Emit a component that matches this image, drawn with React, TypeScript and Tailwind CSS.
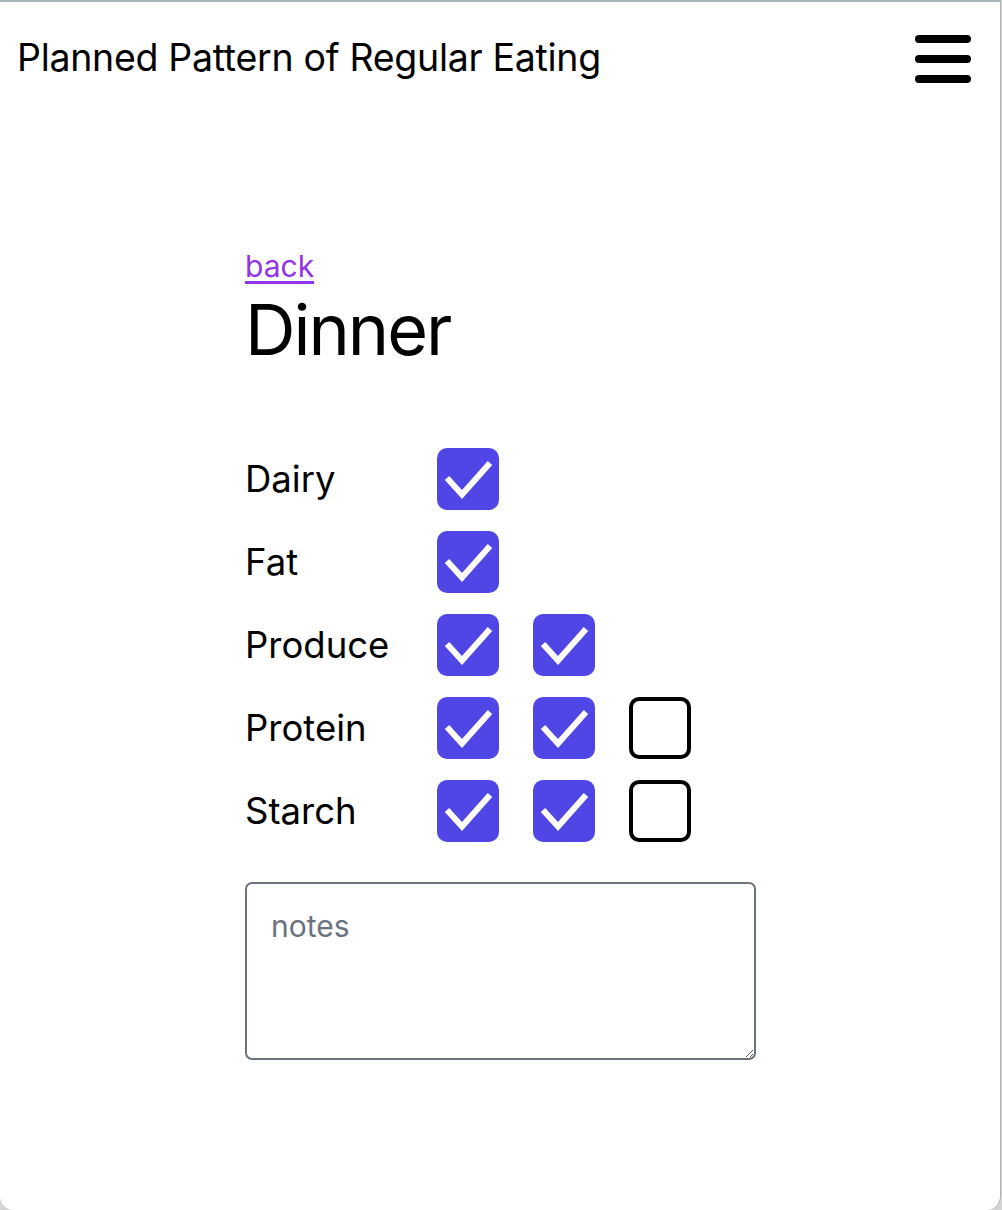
import React from "react";

function Box({ checked }: { checked: boolean }) {
  if (checked) {
    return (
      <div className="w-[62px] h-[62px] rounded-[10px] bg-[#4f46e5] shrink-0">
        <svg width="62" height="62" viewBox="0 0 62 62">
          <path d="M10 30 L25 46.5 L53 15" fill="none" stroke="white" strokeWidth="6" strokeLinecap="butt" strokeLinejoin="miter" />
        </svg>
      </div>
    );
  }
  return <div className="w-[62px] h-[62px] rounded-[10px] border-4 border-black bg-white shrink-0" />;
}

const rows: { label: string; boxes: boolean[] }[] = [
  { label: "Dairy", boxes: [true] },
  { label: "Fat", boxes: [true] },
  { label: "Produce", boxes: [true, true] },
  { label: "Protein", boxes: [true, true, false] },
  { label: "Starch", boxes: [true, true, false] },
];

export default function App() {
  return (
    <div className="w-[1002px] h-[1210px] bg-[#d4d4d4]" style={{ fontFamily: "Inter, 'Noto Sans', sans-serif" }}>
      <div className="w-[1001px] h-[1210px] bg-white border-t-2 border-[#a3b6ba] border-r border-r-[#b3b3b3] rounded-b-[14px] flex flex-col">
        <header className="flex items-center justify-between pl-[17px] pr-[29px] pt-[30px]">
          <h1 className="text-[37.5px] leading-[52px] text-black tracking-[-0.3px]">Planned Pattern of Regular Eating</h1>
          <div className="flex flex-col gap-[12px] pt-[1px]">
            <div className="w-[56px] h-[8px] rounded-full bg-black" />
            <div className="w-[56px] h-[8px] rounded-full bg-black" />
            <div className="w-[56px] h-[8px] rounded-full bg-black" />
          </div>
        </header>
        <main className="pl-[245px] pt-[164px]">
          <a href="#" className="block text-[30px] leading-[36px] text-[#9333ea] underline underline-offset-[4px] decoration-[3px] w-fit">back</a>
          <h2 className="text-[70px] leading-[80px] tracking-[-2px] text-black mt-[6px]">Dinner</h2>
          <div className="mt-[78px] flex flex-col gap-[21px]">
            {rows.map((r) => (
              <div key={r.label} className="flex items-center">
                <div className="w-[192px] text-[36.5px] leading-[44px] text-black">{r.label}</div>
                <div className="flex gap-[34px]">
                  {r.boxes.map((c, i) => (
                    <Box key={i} checked={c} />
                  ))}
                </div>
              </div>
            ))}
          </div>
          <textarea
            placeholder="notes"
            className="mt-[40px] block w-[511px] h-[178px] border-2 border-[#6b7280] rounded-[7px] px-[24px] py-[22px] text-[30px] leading-[40px] placeholder:text-[#6b7280] outline-none"
          />
        </main>
      </div>
    </div>
  );
}
